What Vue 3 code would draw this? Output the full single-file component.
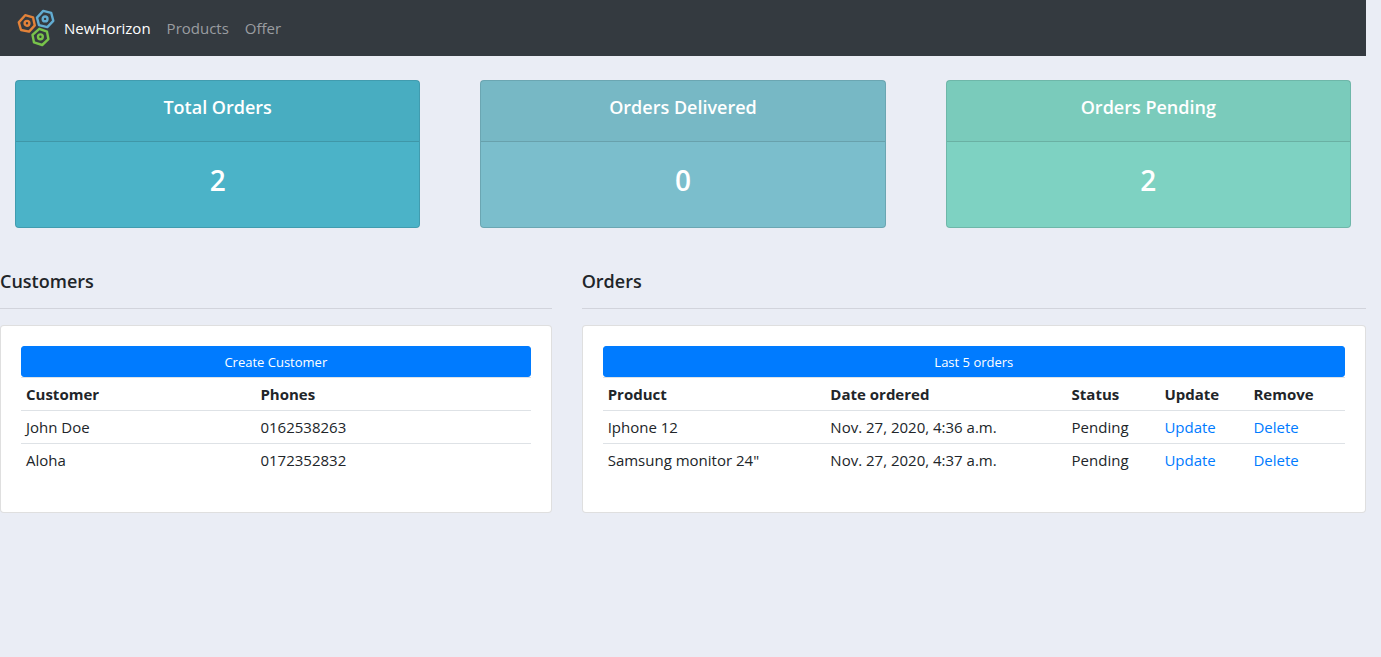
<script setup>
const stats = [
  { title: 'Total Orders', value: 2, tone: 'total' },
  { title: 'Orders Delivered', value: 0, tone: 'delivered' },
  { title: 'Orders Pending', value: 2, tone: 'pending' },
]

const customers = [
  { name: 'John Doe', phone: '0162538263' },
  { name: 'Aloha', phone: '0172352832' },
]

const orders = [
  { product: 'Iphone 12', date: 'Nov. 27, 2020, 4:36 a.m.', status: 'Pending' },
  { product: 'Samsung monitor 24"', date: 'Nov. 27, 2020, 4:37 a.m.', status: 'Pending' },
]
</script>

<template>
  <div class="page">
    <nav class="navbar">
      <a class="brand" href="#" aria-label="NewHorizon home">
        <svg class="logo" viewBox="0 0 40 40" width="40" height="40" fill="none" stroke-width="2.4" stroke-linejoin="round">
          <g stroke="#e38239">
            <path d="M9.2 7.2 17 9.3 18.8 17.4 13.1 23.6 5 22 2.8 14.4Z" />
            <circle cx="11" cy="15.3" r="2.4" />
          </g>
          <g stroke="#62acd2">
            <path d="M27.2 2.9 35.2 4.9 37.3 12.8 31.3 19.1 23 17.2 21 9.6Z" />
            <circle cx="29.1" cy="10.9" r="2.4" />
          </g>
          <g stroke="#78c34a">
            <path d="M23.3 20.8 31 23.6 32.4 31.2 26.2 37 18 34.4 16.5 26.9Z" />
            <circle cx="24.4" cy="28.8" r="2.4" />
          </g>
        </svg>
      </a>
      <a class="nav-link active" href="#">NewHorizon</a>
      <a class="nav-link" href="#">Products</a>
      <a class="nav-link" href="#">Offer</a>
    </nav>

    <main>
      <section class="stats">
        <article v-for="stat in stats" :key="stat.title" class="stat" :class="stat.tone">
          <h2 class="stat-title">{{ stat.title }}</h2>
          <p class="stat-value">{{ stat.value }}</p>
        </article>
      </section>

      <div class="row">
        <section class="col-customers">
          <h2 class="section-title">Customers</h2>
          <hr class="rule">
          <div class="card">
            <button class="btn" type="button">Create Customer</button>
            <table class="table">
              <colgroup>
                <col class="w-name"><col>
              </colgroup>
              <thead>
                <tr><th scope="col">Customer</th><th scope="col">Phones</th></tr>
              </thead>
              <tbody>
                <tr v-for="c in customers" :key="c.name">
                  <td>{{ c.name }}</td>
                  <td>{{ c.phone }}</td>
                </tr>
              </tbody>
            </table>
          </div>
        </section>

        <section class="col-orders">
          <h2 class="section-title">Orders</h2>
          <hr class="rule">
          <div class="card">
            <button class="btn" type="button">Last 5 orders</button>
            <table class="table">
              <colgroup>
                <col class="w-product"><col class="w-date"><col class="w-status"><col class="w-update"><col>
              </colgroup>
              <thead>
                <tr>
                  <th scope="col">Product</th>
                  <th scope="col">Date ordered</th>
                  <th scope="col">Status</th>
                  <th scope="col">Update</th>
                  <th scope="col">Remove</th>
                </tr>
              </thead>
              <tbody>
                <tr v-for="o in orders" :key="o.date">
                  <td>{{ o.product }}</td>
                  <td>{{ o.date }}</td>
                  <td>{{ o.status }}</td>
                  <td><a href="#">Update</a></td>
                  <td><a href="#">Delete</a></td>
                </tr>
              </tbody>
            </table>
          </div>
        </section>
      </div>
    </main>
  </div>
</template>

<style>
body {
  background: #eaedf5;
}
</style>

<style scoped>
.page,
.page * {
  box-sizing: border-box;
}

.page {
  padding-right: 15px;
  color: #212529;
  font-family: "Open Sans", "Noto Sans", sans-serif;
  font-size: 15px;
  line-height: 24px;
}

.navbar {
  display: flex;
  align-items: center;
  height: 56px;
  padding: 0 16px;
  background: #343a40;
}

.brand {
  display: flex;
}

.nav-link {
  padding: 8px;
  color: #9a9da0;
  text-decoration: none;
}

.nav-link.active {
  color: #fff;
}

.stats {
  display: grid;
  grid-template-columns: repeat(3, 1fr);
  gap: 60px;
  padding: 24px 15px 0;
}

.stat {
  border: 1px solid rgba(0, 0, 0, 0.125);
  border-radius: 4px;
  color: #fff;
  text-align: center;
}

.stat.total {
  background: #4bb3c8;
}

.stat.delivered {
  background: #7bbecc;
}

.stat.pending {
  background: #7ed2c2;
}

.stat-title {
  margin: 0;
  padding: 14px 20px 22px;
  border-bottom: 1px solid rgba(0, 0, 0, 0.125);
  background: rgba(0, 0, 0, 0.03);
  font-size: 18px;
  font-weight: 600;
  line-height: 24px;
}

.stat-value {
  margin: 0;
  padding: 21px 20px 30px;
  font-size: 28px;
  font-weight: 600;
  line-height: 34px;
}

.row {
  display: flex;
  margin: 41px -15px 0;
}

.col-customers,
.col-orders {
  min-width: 0;
  padding: 0 15px;
}

.col-customers {
  flex: 0 0 41.6667%;
}

.col-orders {
  flex: 0 0 58.3333%;
}

.section-title {
  margin: 0;
  font-size: 18px;
  font-weight: 600;
  line-height: 24px;
}

.rule {
  margin: 15px 0 16px;
  border: 0;
  border-top: 1px solid rgba(0, 0, 0, 0.1);
}

.card {
  padding: 20px 20px 36px;
  border: 1px solid rgba(0, 0, 0, 0.125);
  border-radius: 4px;
  background: #fff;
}

.btn {
  display: block;
  width: 100%;
  padding: 5px 8px 3px;
  border: 1px solid #007bff;
  border-radius: 3px;
  background: #007bff;
  color: #fff;
  font-family: inherit;
  font-size: 13px;
  line-height: 21px;
}

.table {
  width: 100%;
  border-collapse: separate;
  border-spacing: 0;
  table-layout: fixed;
}

.table th,
.table td {
  padding: 4px 5px;
  border-top: 1px solid #dee2e6;
  text-align: left;
  white-space: nowrap;
}

.table th {
  font-weight: 700;
}

.table a {
  color: #007bff;
  text-decoration: none;
}

.w-name {
  width: 46%;
}

.w-product {
  width: 30%;
}

.w-date {
  width: 32.5%;
}

.w-status {
  width: 12.5%;
}

.w-update {
  width: 12%;
}
</style>
